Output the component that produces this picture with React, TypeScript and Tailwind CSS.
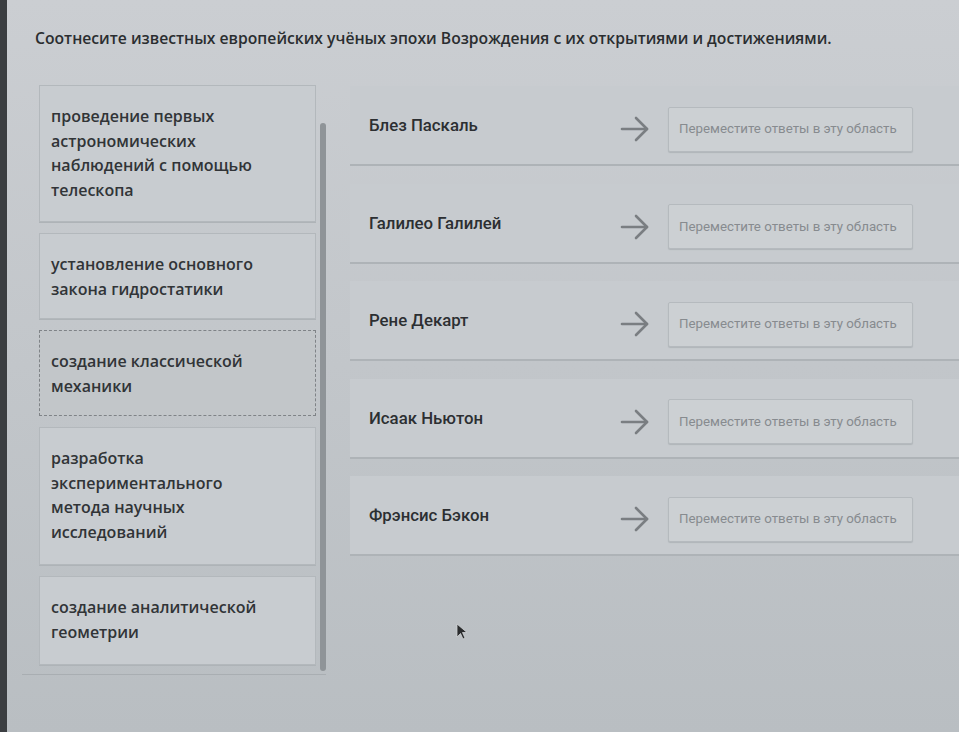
import React from "react";

const answers: { lines: string[]; dashed?: boolean; h: string }[] = [
  { lines: ["проведение первых", "астрономических", "наблюдений с помощью", "телескопа"], h: "h-[137px]" },
  { lines: ["установление основного", "закона гидростатики"], h: "h-[86px]" },
  { lines: ["создание классической", "механики"], dashed: true, h: "h-[86px]" },
  { lines: ["разработка", "экспериментального", "метода научных", "исследований"], h: "h-[138px]" },
  { lines: ["создание аналитической", "геометрии"], h: "h-[89px]" },
];

const names = ["Блез Паскаль", "Галилео Галилей", "Рене Декарт", "Исаак Ньютон", "Фрэнсис Бэкон"];

function Arrow() {
  return (
    <svg width="30" height="26" viewBox="0 0 30 26" fill="none" stroke="#7a7e82" strokeWidth="2.6" strokeLinecap="round" strokeLinejoin="round">
      <path d="M2 13 H27" />
      <path d="M16 2 L27 13 L16 24" />
    </svg>
  );
}

export default function App() {
  return (
    <div
      className="relative w-[959px] h-[732px] overflow-hidden bg-gradient-to-b from-[#cbced2] to-[#b9bec2] text-[#2b2e31]"
      style={{ fontFamily: "Roboto, 'Noto Sans', sans-serif" }}
    >
      <div className="absolute left-0 top-0 h-full w-[7px] bg-[#3b3e41]" />
      <div
        className="whitespace-nowrap pl-[35px] pt-[27px] text-[15.7px] font-semibold leading-[22px] text-[#2a2d30]"
        style={{ fontFamily: "'Open Sans', sans-serif" }}
      >
        Соотнесите известных европейских учёных эпохи Возрождения с их открытиями и достижениями.
      </div>

      <div className="mt-[34px] flex">
        {/* Left list */}
        <div className="ml-[22px] flex w-[304px] h-[592px] border-b border-[#a9aeb2]">
          <div className="flex w-[298px] flex-col gap-[11px] pl-[17px] pt-[2px]">
            {answers.map((a, i) => (
              <div
                key={i}
                className={`${a.h} w-[277px] pl-[11px] pr-[6px] py-[18px] ${
                  a.dashed ? "border border-dashed border-[#7f8387] bg-[#c2c6c9]" : "border border-[#b3b8bc] bg-[#c8ccd0] shadow-[0_1px_0_#aeb3b7]"
                }`}
                style={{ fontFamily: "'Open Sans', sans-serif" }}
              >
                {a.lines.map((l, j) => (
                  <div key={j} className="whitespace-nowrap text-[16px] font-semibold leading-[24.5px] text-[#313437]">
                    {l}
                  </div>
                ))}
              </div>
            ))}
          </div>
          <div className="mt-[40px] h-[548px] w-[6px] rounded-[3px] bg-[#8f9498]" />
        </div>

        {/* Right list */}
        <div className="ml-[24px] flex flex-1 flex-col gap-[17.5px] pt-[3px]">
          {names.map((n) => (
            <div
              key={n}
              className="flex h-[80px] items-center border-b-2 border-[#aeb3b7] bg-[#c7cbcf] pl-[19px] pt-[8px]"
            >
              <div className="-mt-[6px] w-[251px] text-[16.8px] font-medium text-[#2c2f32]">{n}</div>
              <Arrow />
              <div className="ml-[18px] flex h-[45px] w-[245px] items-center rounded-[2px] border border-[#b5babe] bg-[#ccd0d3] pl-[10px] text-[13.3px] text-[#878b8f] shadow-[0_1px_1px_#b0b5b9]">
                Переместите ответы в эту область
              </div>
            </div>
          ))}
        </div>
      </div>

      {/* cursor */}
      <svg className="absolute left-[456px] top-[623px]" width="12" height="18" viewBox="0 0 12 18">
        <path d="M1 1 L1 14 L4.5 10.5 L7 16 L9 15 L6.5 9.5 L11 9.5 Z" fill="#2a2c2e" stroke="#d0d3d6" strokeWidth="0.8" />
      </svg>
    </div>
  );
}
